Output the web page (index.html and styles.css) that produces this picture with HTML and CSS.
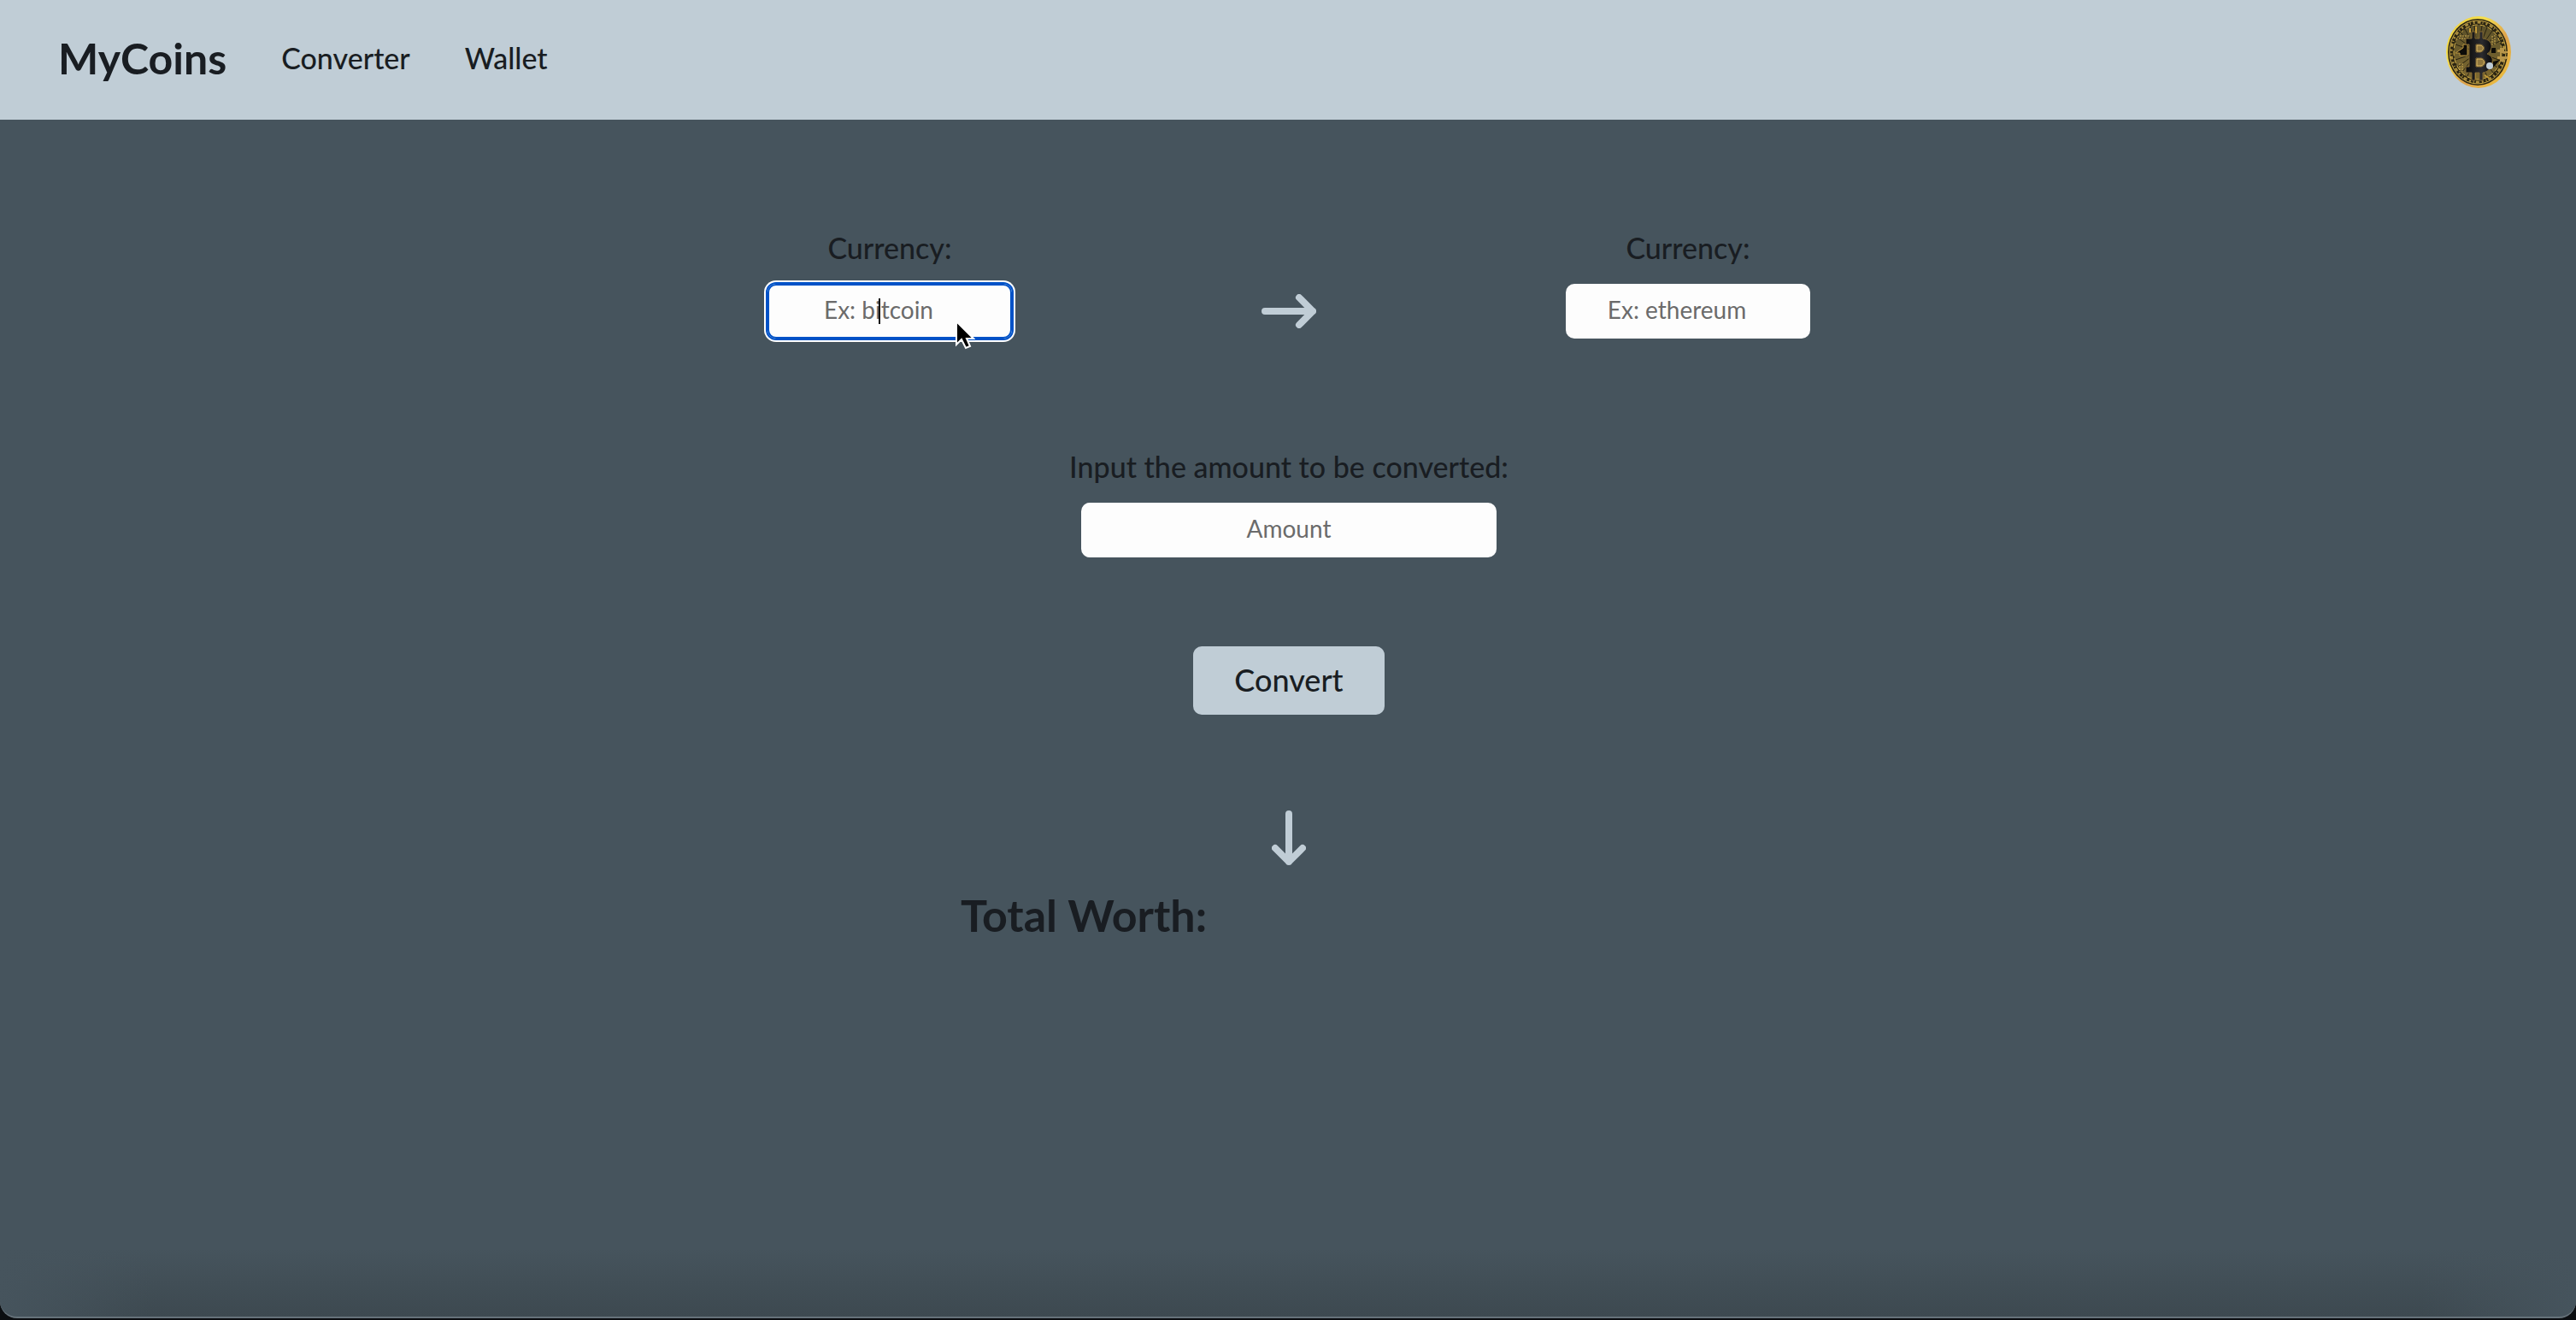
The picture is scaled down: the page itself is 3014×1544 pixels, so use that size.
FILE: index.html
```html
<!DOCTYPE html>
<html lang="en">
<head>
<meta charset="utf-8">
<title>MyCoins</title>
<link rel="stylesheet" href="styles.css">
</head>
<body>
<div class="window">
<header class="navbar">
  <nav class="nav" aria-label="Main">
    <a class="brand" href="#">MyCoins</a>
    <a class="nav-link" href="#">Converter</a>
    <a class="nav-link" href="#">Wallet</a>
  </nav>
  <svg class="coin" viewBox="0 0 78 86" aria-hidden="true">
    <defs>
      <linearGradient id="rim" x1="0" y1="0" x2="1" y2="1">
        <stop offset="0" stop-color="#e9c93c"/>
        <stop offset=".3" stop-color="#f6e04e"/>
        <stop offset=".6" stop-color="#dda24c"/>
        <stop offset="1" stop-color="#f0c63a"/>
      </linearGradient>
      <linearGradient id="face" x1="0" y1="0" x2="0" y2="1">
        <stop offset="0" stop-color="#5b5029"/>
        <stop offset="1" stop-color="#7d6930"/>
      </linearGradient>
      <linearGradient id="sheen" x1="0" y1="0" x2="1" y2="0">
        <stop offset="0" stop-color="#0a0a0a"/>
        <stop offset=".6" stop-color="#2b2b2e"/>
        <stop offset="1" stop-color="#08080a"/>
      </linearGradient>
    </defs>
    <ellipse cx="39" cy="43" rx="38" ry="42" fill="url(#rim)"/>
    <ellipse cx="38" cy="43" rx="35" ry="39" fill="#2a2412"/>
    <ellipse cx="38" cy="43" rx="33" ry="37" fill="none" stroke="#c9a846" stroke-width="1"/>
    <ellipse cx="38" cy="43" rx="31" ry="35" fill="none" stroke="#a98c3c" stroke-width="3" stroke-dasharray="2 3 4 2 1 3"/>
    <ellipse cx="38" cy="43" rx="28" ry="32" fill="url(#face)" stroke="#d5b14a" stroke-width="1" stroke-dasharray="6 3"/>
    <g stroke="#292310" stroke-width="1">
      <path d="M38 43 14 26M38 43 18 20M38 43 23 16M38 43 29 13M38 43 34 12M38 43 43 12M38 43 49 14M38 43 55 18M38 43 60 23M38 43 64 30M38 43 12 34M38 43 12 52M38 43 15 60M38 43 20 66M38 43 26 71M38 43 33 74M38 43 42 74M38 43 49 72M38 43 56 67M38 43 61 61M38 43 65 53"/>
    </g>
    <path d="M17 24h11M16 27h11M55 24v12M58 23v12M17 56v10M20 56v10" stroke="#d0ad52" stroke-width="1" stroke-dasharray="2 1"/>
    <path d="M12 44 21 38V34H26V47H17V44Z" fill="#0c0b08" stroke="#b9943f" stroke-width="1"/>
    <path d="M54 38h5v6h-5zM56 54l8-2-8 9z" fill="#0c0b08"/>
    <path d="M61 40h3v-2h5v4h4v2h-8v4h8v3h-4v3h-5v-3h-3v-3h3v-5h-3z" fill="#b8964a"/>
    <path d="M36 13v8M35 67v7M29 15v5M46 70l5 3" stroke="#c59b38" stroke-width="2"/>
    <path fill-rule="evenodd" d="M24 27H31V19H35V27H40V19H44V27C51 28 55 32 54 38C53 42 51 44 49 45C54 47 56 50 55 55C54 62 50 66 44 67V67V76H40V67H35V76H31V67H24V60H28V34H24ZM36 34V43H41C47 42 47 35 41 34ZM36 50V60H42C48 59 48 51 42 50Z" fill="url(#sheen)" stroke="#806733" stroke-width="1"/>
    <path d="M37 35h4c5 1 4 6 0 7h-4zM37 51h5c5 1 4 7 0 8h-5z" fill="#90773e" stroke="#dfbb66" stroke-width="1"/>
    <circle cx="52" cy="59" r="4" fill="#c0cdd6"/>
  </svg>
</header>

<main class="converter">
  <form class="form">
    <div class="pair">
      <div class="field">
        <label class="label" for="from">Currency:</label>
        <div class="control">
          <input class="input picker focused" id="from" type="text" placeholder="Ex: bitcoin">
          <span class="caret"></span>
          <svg class="pointer" viewBox="0 0 24 36" aria-hidden="true"><path d="M2 2V29L8 23L13 33L18 31L14 22H22Z" fill="#000" stroke="#fff" stroke-width="2"/></svg>
        </div>
      </div>
      <svg class="arrow arrow-right" viewBox="0 0 64 40" aria-hidden="true"><path d="M4 20H60M44 4 60 20 44 36"/></svg>
      <div class="field">
        <label class="label" for="to">Currency:</label>
        <input class="input picker" id="to" type="text" placeholder="Ex: ethereum">
      </div>
    </div>
    <div class="field">
      <label class="label" for="amount">Input the amount to be converted:</label>
      <input class="input amount" id="amount" type="text" placeholder="Amount">
    </div>
    <button class="convert" type="button">Convert</button>
  </form>
  <svg class="arrow arrow-down" viewBox="0 0 40 64" aria-hidden="true"><path d="M20 4V60M4 44 20 60 36 44"/></svg>
  <h2 class="total">Total Worth:</h2>
</main>
</div>
</body>
</html>
```
FILE: styles.css
```css
* {
  box-sizing: border-box;
}

body {
  margin: 0;
  background: #0b0e11;
  color: #191d22;
  font-family: Lato, "Liberation Sans", sans-serif;
  font-size: 34px;
  line-height: 40px;
}

.window {
  min-height: calc(100vh - 2px);
  overflow: hidden;
  border-bottom: 2px solid #66727a;
  border-radius: 0 0 20px 20px;
  background:
    linear-gradient(to right, #46545d, rgba(70, 84, 93, 0) 6%, rgba(70, 84, 93, 0) 94%, #46545d),
    linear-gradient(to top, #3d4950, #46545d 80px);
}

.navbar {
  display: flex;
  justify-content: space-between;
  align-items: flex-start;
  height: 140px;
  padding: 18px 75px 0 68px;
  background: #c0cdd6;
}

.nav {
  display: flex;
  align-items: center;
  gap: 64px;
  padding-top: 20px;
}

.nav a {
  color: inherit;
  text-decoration: none;
}

.nav .brand {
  font-size: 50px;
  line-height: 60px;
  font-weight: 700;
}

.nav-link {
  font-weight: 500;
}

.coin {
  width: 78px;
  height: 86px;
}

.converter,
.form,
.field {
  display: flex;
  flex-direction: column;
  align-items: center;
}

.converter {
  padding: 130px 0 0 2px;
}

.form {
  gap: 104px;
}

.pair {
  display: flex;
  align-items: flex-end;
  gap: 292px;
  margin-bottom: 26px;
}

.field {
  gap: 22px;
}

.label {
  font-weight: 500;
}

.control {
  position: relative;
  display: flex;
}

.input {
  width: 286px;
  height: 64px;
  padding: 0 16px 4px;
  border: 0;
  border-radius: 10px;
  outline: 0;
  background: #fdfdfd;
  color: inherit;
  font: inherit;
  font-size: 28px;
  text-align: center;
}

.input::placeholder {
  color: #6b6b6b;
  opacity: 1;
}

.picker {
  padding-right: 42px;
}

.focused {
  box-shadow: inset 0 0 0 2px #0052c7, 0 0 0 2px #0052c7, 0 0 0 4px #fff;
}

.amount {
  width: 486px;
}

.caret {
  position: absolute;
  left: 130px;
  top: 17px;
  width: 2px;
  height: 30px;
  background: #111;
}

.pointer {
  position: absolute;
  left: 219px;
  top: 42px;
  width: 24px;
  height: 36px;
}

.arrow {
  fill: none;
  stroke: #c0cdd6;
  stroke-width: 8;
  stroke-linecap: round;
  stroke-linejoin: round;
}

.arrow-right {
  width: 64px;
  height: 40px;
  margin-bottom: 12px;
}

.arrow-down {
  width: 40px;
  height: 64px;
  margin-top: 112px;
}

.convert {
  width: 224px;
  height: 80px;
  padding: 0 0 2px;
  border: 0;
  border-radius: 10px;
  background: #c0cdd6;
  color: inherit;
  font: inherit;
  font-size: 36px;
  font-weight: 500;
}

.total {
  width: 768px;
  max-width: 100%;
  margin: 28px 0 0;
  font-size: 52px;
  line-height: 60px;
  font-weight: 700;
}
```
